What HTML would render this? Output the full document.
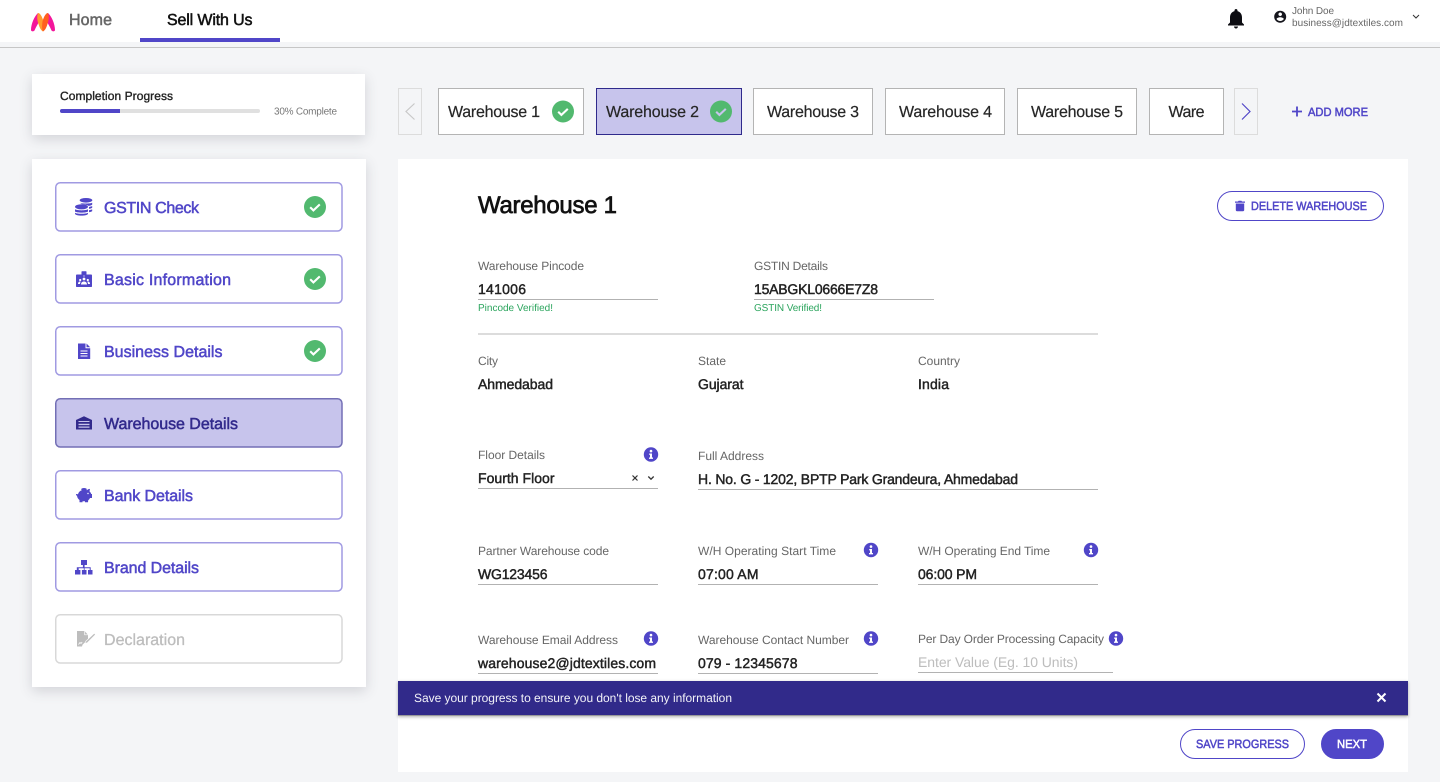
<!DOCTYPE html>
<html lang="en"><head><meta charset="utf-8"><title>Sell With Us</title>
<style>
*{box-sizing:border-box}
html,body{margin:0;padding:0;width:1440px;height:782px;overflow:hidden;background:#f4f5f7;font-family:"Liberation Sans",sans-serif}
.b{position:absolute}
.card{background:#fff;box-shadow:0 4px 12px rgba(60,60,80,.18)}
.nav{fill:#fff;stroke:#a09ae2;stroke-width:1.5px}
.tab{top:88px;height:47px;background:#fff;border:1px solid #b4b4b4}
.arr{top:88px;height:47px;width:24px;border:1px solid #dcdcdc;background:#f4f5f7}
.pill{height:30px;border:1px solid #5046c8;border-radius:15px;background:#fff}
svg.o{position:absolute;left:0;top:0;text-rendering:geometricPrecision}
text{font-family:"Liberation Sans",sans-serif;font-size:12px}
.m{stroke-width:.5px;paint-order:stroke}
.l{fill:#666}
.v{font-size:14px;fill:#222;stroke:#222;stroke-width:.45px;paint-order:stroke}
.n{font-size:16px;fill:#5046c8;stroke:#5046c8;stroke-width:.5px;paint-order:stroke}
.t{font-size:16px;fill:#262626;stroke:#262626;stroke-width:.2px;paint-order:stroke}
.ln{fill:#b2b2b2}
</style></head><body>
<div class="b" style="left:0;top:0;width:1440px;height:42px;background:#fff"></div>
<div class="b" style="left:0;top:47px;width:1440px;height:1px;background:#c6c6c6"></div>
<div class="b" style="left:140px;top:38px;width:140px;height:4px;background:#5046c8"></div>
<div class="b card" style="left:32px;top:74px;width:333px;height:61px"></div>
<div class="b" style="left:60px;top:109px;width:200px;height:4px;background:#e0e0e0;border-radius:2px"></div>
<div class="b" style="left:60px;top:109px;width:60px;height:4px;background:#5046c8;border-radius:2px 0 0 2px"></div>
<div class="b card" style="left:32px;top:159px;width:334px;height:528px"></div>
<div class="b arr" style="left:398px"></div>
<div class="b tab" style="left:438px;width:146px"></div>
<div class="b tab" style="left:596px;width:146px;background:#c7c4ec;border-color:#2f2a8c"></div>
<div class="b tab" style="left:753px;width:120px"></div>
<div class="b tab" style="left:885px;width:120px"></div>
<div class="b tab" style="left:1017px;width:120px"></div>
<div class="b tab" style="left:1149px;width:75px"></div>
<div class="b arr" style="left:1234px"></div>
<div class="b" style="left:398px;top:159px;width:1010px;height:613px;background:#fff"></div>
<div class="b pill" style="left:1217px;top:191px;width:167px"></div>
<div class="b" style="left:478px;top:333px;width:620px;height:2px;background:#dcdcdc"></div>
<div class="b" style="left:398px;top:681px;width:1010px;height:35px;background:#312a8a;border-bottom:1px solid #9a9a9a;box-shadow:0 1px 3px rgba(0,0,0,.3)"></div>
<div class="b pill" style="left:1180px;top:729px;width:125px"></div>
<div class="b pill" style="left:1321px;top:729px;width:63px;background:#5046c8"></div>

<svg class="o" width="1440" height="782" viewBox="0 0 1440 782" xmlns="http://www.w3.org/2000/svg">
<defs>
<g id="chk"><circle r="11" fill="#52b96f"/><path d="M-4.800.3-1.600 3.400 4.800-2.600" fill="none" stroke="#fff" stroke-width="2.100"/></g>
<g id="chk2"><circle r="11" fill="#52b96f"/><path d="M-4.800.3-1.600 3.400 4.800-2.600" fill="none" stroke="#c7c4ec" stroke-width="2.100"/></g>
<g id="inf"><circle r="7.200" fill="#5046c8"/><circle cy="-3.400" r="1.300" fill="#fff"/><path d="M-1.800-1H1V3H2V4.400H-2V3H-1V.4H-1.800Z" fill="#fff"/></g>
</defs>

<!-- side nav boxes -->
<rect class="nav" x="55.750" y="182.750" width="286.250" height="48.250" rx="4.500"/>
<rect class="nav" x="55.750" y="254.750" width="286.250" height="48.250" rx="4.500"/>
<rect class="nav" x="55.750" y="326.750" width="286.250" height="48.250" rx="4.500"/>
<rect class="nav" x="55.750" y="398.750" width="286.250" height="48.250" rx="4.500" style="fill:#c7c4ec;stroke:#736fb5"/>
<rect class="nav" x="55.750" y="470.750" width="286.250" height="48.250" rx="4.500"/>
<rect class="nav" x="55.750" y="542.750" width="286.250" height="48.250" rx="4.500"/>
<rect class="nav" x="55.750" y="614.750" width="286.250" height="48.250" rx="4.500" style="stroke:#d8d8d8"/>

<!-- header -->
<path d="M38 13C34.500 16 31 24 31 30C31 31.500 33.500 31.800 34.500 30.500C36 27 37.500 24.500 39 22L41 19C40.500 16 39.500 14 38 13Z" fill="#f3169b"/>
<path d="M48 13C51.500 16 55 24 55 30C55 31.500 52.500 31.800 51.500 30.500C50 27 48.500 24.500 47 22L45 19C45.500 16 46.500 14 48 13Z" fill="#f3169b"/>
<path d="M38 13C36.800 16 37 20 38.500 24C39.500 27.500 41 30.500 43 31.500C44 29 44 25 43.500 21.500C42 16 40 13 38 13Z" fill="#ff9a2e"/>
<path d="M48 13C49.200 16 49 20 47.500 24C46.500 27.500 45 30.500 43 31.500C41.800 29 42 25 42.500 21.500C44 16 46 13 48 13Z" fill="#ff5f1f"/>
<text x="69" y="25" textLength="43" class="m" style="font-size:16px;fill:#666;stroke:#666">Home</text>
<text x="167" y="25" textLength="85.500" class="m" style="font-size:16px;fill:#111;stroke:#111">Sell With Us</text>
<svg x="1224" y="6.500" width="24" height="24" viewBox="0 0 24 24"><path fill="#0d0d12" d="M12 22c1.100 0 2-.9 2-2h-4c0 1.100.89 2 2 2zm6-6v-5c0-3.070-1.640-5.640-4.500-6.320V4c0-.83-.67-1.500-1.500-1.500s-1.500.67-1.500 1.500v.68C7.630 5.360 6 7.920 6 11v5l-2 2v1h16v-1l-2-2z"/></svg>
<svg x="1273" y="9.500" width="14.400" height="14.400" viewBox="0 0 24 24"><path fill="#15151c" d="M12 2C6.480 2 2 6.480 2 12s4.480 10 10 10 10-4.480 10-10S17.520 2 12 2zm0 3c1.660 0 3 1.340 3 3s-1.340 3-3 3-3-1.340-3-3 1.340-3 3-3zm0 14.200c-2.500 0-4.710-1.280-6-3.220.03-1.990 4-3.080 6-3.080 1.990 0 5.970 1.090 6 3.080-1.290 1.940-3.500 3.220-6 3.220z"/></svg>
<text x="1292" y="14" textLength="42" style="font-size:10px;fill:#666">John Doe</text>
<text x="1292" y="26" textLength="111" style="font-size:10px;fill:#666">business@jdtextiles.com</text>
<path d="M1413 15 1416 18 1419 15" fill="none" stroke="#333" stroke-width="1"/>

<!-- progress -->
<text x="60" y="100" textLength="113" class="m" style="fill:#222;stroke:#222;stroke-width:.35px">Completion Progress</text>
<text x="274" y="114.500" textLength="63" style="font-size:10px;fill:#777">30% Complete</text>

<!-- side nav -->
<text x="104" y="213" textLength="95" class="n">GSTIN Check</text>
<text x="104" y="285" textLength="127" class="n">Basic Information</text>
<text x="104" y="357" textLength="118.500" class="n">Business Details</text>
<text x="104" y="429" textLength="134" class="n" style="fill:#322a8c;stroke:#322a8c">Warehouse Details</text>
<text x="104" y="501" textLength="89" class="n">Bank Details</text>
<text x="104" y="573" textLength="95" class="n">Brand Details</text>
<text x="104" y="645" textLength="81" style="font-size:16px;fill:#bdbdbd;stroke:#bdbdbd;stroke-width:.3px;paint-order:stroke">Declaration</text>
<use href="#chk" x="315" y="207"/><use href="#chk" x="315" y="279"/><use href="#chk" x="315" y="351"/>
<!-- coins -->
<g fill="#5046c8"><ellipse cx="86" cy="200.300" rx="6.300" ry="2.300"/><path d="M79.800 202.800c1.500 1 10.500 1 12.400 0v1.800c-.9.700-2.300 1.100-3.700 1.300-1.200-1-3.500-1.700-6.500-1.700z"/><path d="M89 207l3.200-.9v1.700c-.7.600-2 .9-3.200 1.100zM89 210.300l3.200-.9v1.700c-.7.600-2 .9-3.200 1.100z"/><ellipse cx="81.500" cy="206.800" rx="6.500" ry="2.600"/><path d="M75 209.300c2 1.400 11 1.400 13 0v2.200c-2 1.500-11 1.500-13 0zM75 212.700c2 1.400 11 1.400 13 0v.9c0 2.700-13 2.700-13 0z"/></g>
<!-- id badge -->
<rect x="76" y="274.500" width="16" height="12.500" rx=".8" fill="#5046c8"/>
<rect x="81.500" y="271.300" width="5" height="5" rx=".6" fill="#5046c8"/>
<rect x="83" y="275.600" width="2" height=".8" fill="#c7c4ec"/>
<g fill="#fff"><circle cx="84" cy="279" r="1.400"/><circle cx="80.200" cy="280" r="1.100"/><circle cx="87.800" cy="280" r="1.100"/><path d="M81 284.500c0-4 6-4 6 0zM78 284c0-2.500 2-2.900 2.800-2.300-.6.700-.8 1.500-.8 2.300zM90 284c0-2.500-2-2.900-2.800-2.300.6.700.8 1.500.8 2.300z"/></g>
<!-- doc -->
<path fill="#5046c8" fill-rule="evenodd" d="M78 343.500h7.500v4.700h4.700V359H78zM86.500 343.500l3.700 3.800h-3.700zM80.500 350.500v1h7v-1zM80.500 353v1h7v-1zM80.500 355.500v1h7v-1z"/>
<!-- warehouse -->
<path fill="#322a8c" fill-rule="evenodd" d="M76 429.500v-9.500l8-3.800 8 3.800v9.500zM78.500 421v1h11v-1zM78.500 423.800v1.300h11v-1.300zM78.500 426.500v1.300h11v-1.300z"/>
<!-- piggy -->
<g transform="translate(0,-1.500)"><path fill="#5046c8" d="M76 495.500l2 .3c.8-3 3.500-4.500 6.500-4.500 1 0 1.500 0 2.500.4 1-1 2-1.300 3-1.300l-.5 2.500c1 .8 1.400 1.700 1.700 2.600H92v4h-2c-.4 1-1 1.600-1.800 2.200l-.2 2h-3v-1h-2.500v1h-3v-2.200c-1.500-1-2.300-2.500-2.500-4.400l-1-.3z"/><ellipse cx="84" cy="490.800" rx="2.800" ry="1.300" fill="#5046c8"/><circle cx="88" cy="495" r=".7" fill="#fff"/></g>
<!-- sitemap -->
<path fill="#5046c8" d="M81 560h6v5h-2.400v2.200h6.100v2.800h1.800v4.500h-4.500v-4.500h1.700v-1.800h-5.100v1.800h1.900v4.500h-4.600v-4.500h1.900v-1.800h-5.100v1.800h1.700v4.500H75v-4.500h1.800v-2.800h6.100v-2.200H81z"/>
<!-- declaration -->
<path fill="#bdbdbd" d="M77 631h7.500l3.500 3.800v4.500l-5.500 5.500-.5 1.700H77z"/>
<path d="M84.700 631v3.800h3.300" fill="none" stroke="#fff" stroke-width=".7"/>
<path d="M78.500 644.500l1.500-2 1 1 1.200-1.500" fill="none" stroke="#fff" stroke-width=".8"/>
<path fill="#bdbdbd" stroke="#fff" stroke-width=".6" d="M94.200 633.300l1.300 1.300-8 8-2.600 1 1-2.500z"/>

<!-- tabs -->
<path d="M414.500 103.500 406 111.500 414.500 119.500" fill="none" stroke="#c8c8c8" stroke-width="1.200"/>
<path d="M1242 103.500 1250 111.500 1242 119.500" fill="none" stroke="#5046c8" stroke-width="1.200"/>
<text x="448" y="117" textLength="92" class="t">Warehouse 1</text>
<text x="606" y="117" textLength="93" class="t">Warehouse 2</text>
<text x="767" y="117" textLength="92" class="t">Warehouse 3</text>
<text x="899" y="117" textLength="93" class="t">Warehouse 4</text>
<text x="1031" y="117" textLength="92" class="t">Warehouse 5</text>
<text x="1168.500" y="117" textLength="36" class="t">Ware</text>
<use href="#chk" x="563" y="111.500"/><use href="#chk2" x="721" y="111.500"/>
<path d="M1292 111.500h10M1297 106.500v10" stroke="#5046c8" stroke-width="1.800" fill="none"/>
<text x="1308" y="116" textLength="60" lengthAdjust="spacingAndGlyphs" class="m" style="fill:#5046c8;stroke:#5046c8">ADD MORE</text>

<!-- main -->
<text x="478" y="213" textLength="139" class="m" style="font-size:24px;fill:#111;stroke:#111;stroke-width:.7px">Warehouse 1</text>
<path fill="#5046c8" d="M1235 201.500h3l.6-.7h2.800l.6.700h3v1.300h-10zM1235.800 203.500h8.400v6.500c0 .7-.5 1.200-1.200 1.200h-6c-.7 0-1.200-.5-1.200-1.200z"/>
<text x="1251" y="210" textLength="116" lengthAdjust="spacingAndGlyphs" class="m" style="fill:#5046c8;stroke:#5046c8">DELETE WAREHOUSE</text>

<text x="478" y="270" textLength="106" class="l">Warehouse Pincode</text>
<text x="478" y="294" textLength="48" class="v">141006</text>
<rect x="478" y="299" width="180" height="1" class="ln"/>
<text x="478" y="311" textLength="75" style="font-size:10px;fill:#2aa45c">Pincode Verified!</text>
<text x="754" y="270" textLength="74" class="l">GSTIN Details</text>
<text x="754" y="294" textLength="124" class="v">15ABGKL0666E7Z8</text>
<rect x="754" y="299" width="180" height="1" class="ln"/>
<text x="754" y="311" textLength="68" style="font-size:10px;fill:#2aa45c">GSTIN Verified!</text>

<text x="478" y="365" textLength="20" class="l">City</text>
<text x="698" y="365" textLength="28" class="l">State</text>
<text x="918" y="365" textLength="42" class="l">Country</text>
<text x="478" y="389" textLength="75" class="v">Ahmedabad</text>
<text x="698" y="389" textLength="45.500" class="v">Gujarat</text>
<text x="918" y="389" textLength="31" class="v">India</text>

<text x="478" y="459" textLength="67" class="l">Floor Details</text>
<use href="#inf" x="651" y="454.500"/>
<text x="478" y="483" textLength="76.500" class="v">Fourth Floor</text>
<path d="M632.500 475.500l5 5M637.500 475.500l-5 5" stroke="#333" stroke-width="1.200" fill="none"/>
<path d="M648.300 476.500l2.700 2.700 2.700-2.700" stroke="#333" stroke-width="1.300" fill="none"/>
<rect x="478" y="488" width="180" height="1" class="ln"/>
<text x="698" y="460" textLength="66" class="l">Full Address</text>
<text x="698" y="484" textLength="320" class="v">H. No. G - 1202, BPTP Park Grandeura, Ahmedabad</text>
<rect x="698" y="489" width="400" height="1" class="ln"/>

<text x="478" y="555" textLength="131" class="l">Partner Warehouse code</text>
<text x="478" y="579" textLength="69.500" class="v">WG123456</text>
<rect x="478" y="584" width="180" height="1" class="ln"/>
<text x="698" y="555" textLength="138" class="l">W/H Operating Start Time</text>
<use href="#inf" x="871" y="550"/>
<text x="698" y="579" textLength="60.500" class="v">07:00 AM</text>
<rect x="698" y="584" width="180" height="1" class="ln"/>
<text x="918" y="555" textLength="132" class="l">W/H Operating End Time</text>
<use href="#inf" x="1091" y="550"/>
<text x="918" y="579" textLength="59" class="v">06:00 PM</text>
<rect x="918" y="584" width="180" height="1" class="ln"/>

<text x="478" y="644" textLength="140" class="l">Warehouse Email Address</text>
<use href="#inf" x="651" y="638.500"/>
<text x="478" y="668" textLength="178" class="v">warehouse2@jdtextiles.com</text>
<rect x="478" y="673" width="180" height="1" class="ln"/>
<text x="698" y="644" textLength="151" class="l">Warehouse Contact Number</text>
<use href="#inf" x="871" y="638.500"/>
<text x="698" y="668" textLength="99.500" class="v">079 - 12345678</text>
<rect x="698" y="673" width="180" height="1" class="ln"/>
<text x="918" y="643" textLength="186" class="l">Per Day Order Processing Capacity</text>
<use href="#inf" x="1116" y="638.500"/>
<text x="918" y="667" textLength="160" style="font-size:14px;fill:#bdbdbd">Enter Value (Eg. 10 Units)</text>
<rect x="918" y="672" width="195" height="1" class="ln"/>

<!-- banner -->
<text x="414" y="702" textLength="318" style="fill:#f2f2f8">Save your progress to ensure you don't lose any information</text>
<path d="M1377.500 693.500l8 8M1385.500 693.500l-8 8" stroke="#fff" stroke-width="2" fill="none"/>

<!-- footer -->
<text x="1196" y="748" textLength="93" lengthAdjust="spacingAndGlyphs" class="m" style="fill:#5046c8;stroke:#5046c8">SAVE PROGRESS</text>
<text x="1337" y="748" textLength="30" lengthAdjust="spacingAndGlyphs" class="m" style="fill:#fff;stroke:#fff">NEXT</text>
</svg>
</body></html>
